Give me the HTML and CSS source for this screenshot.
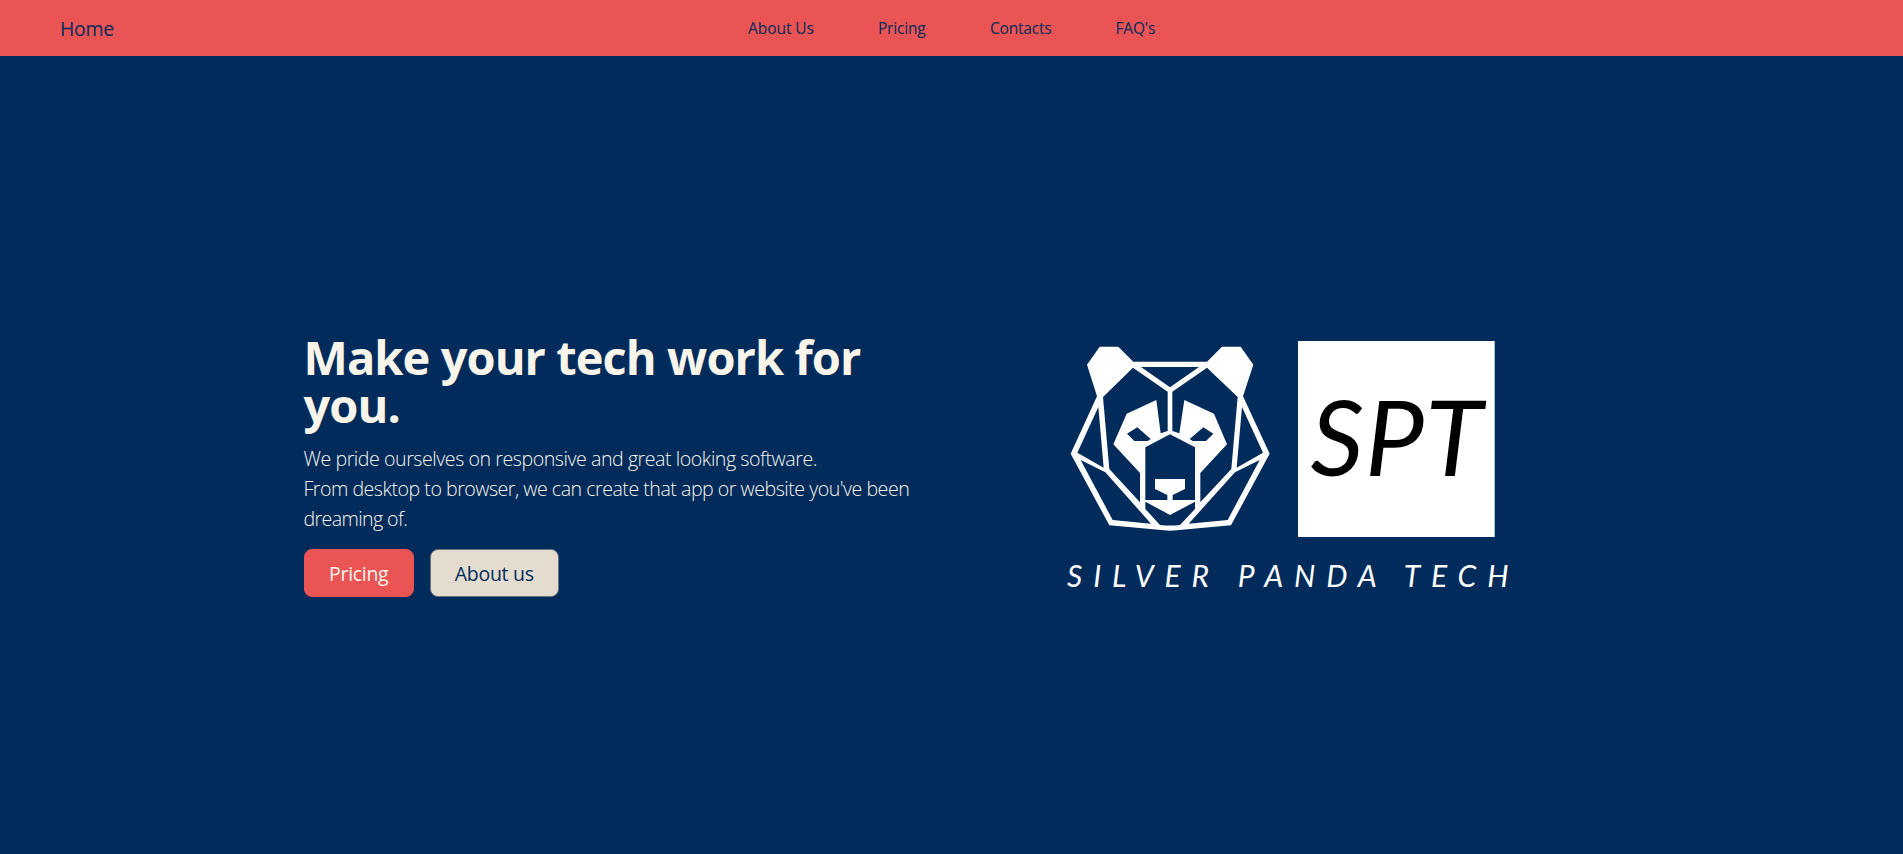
FILE: index.html
```html
<!DOCTYPE html>
<html lang="en">
<head>
<meta charset="utf-8">
<title>Silver Panda Tech</title>
<link rel="stylesheet" href="styles.css">
</head>
<body>
<nav class="navbar">
  <a class="brand">Home</a>
  <div class="links">
    <a class="link about">About Us</a>
    <a class="link pricing">Pricing</a>
    <a class="link contacts">Contacts</a>
    <a class="link faq">FAQ's</a>
  </div>
</nav>
<main class="hero">
  <section class="copy">
    <h1 class="title">Make your tech work for you.</h1>
    <p class="lead"><span class="l1">We pride ourselves on responsive and great looking software.</span><br><span class="l2">From desktop to browser, we can create that app or website you've been</span> <span class="l3">dreaming of.</span></p>
    <div class="actions">
      <button class="btn primary">Pricing</button>
      <button class="btn secondary">About us</button>
    </div>
  </section>
  <svg class="logo" viewBox="1060 335 460 265" width="460" height="265">
    <g transform="translate(1060 335) scale(.333333)" fill="#fff">
      <path d="M119 35H175L220 80H441L486 35H542L580 89L549 184L629 356L513 571L350 586Q330 588 312 586L148 571L32 356L111 184L81 89Z"/>
      <g fill="#002b5b">
        <path d="M243 96H417L330 157Z"/>
        <path d="M219 98L323 170V288L302 295L289 195L200 236L160 328L240 414V502L148 402L129 186Z"/>
        <path d="M441 98L337 170V288L358 295L373 195L462 236L501 328L421 414V502L514 402L533 186Z"/>
        <path d="M115 216L131 398L52 353Z"/>
        <path d="M546 216L530 398L609 353Z"/>
        <path d="M62 375L136 412L273 566L158 555Z"/>
        <path d="M599 375L525 412L386 566L503 555Z"/>
        <path d="M201 296L232 277L272 312L263 318H223Z"/>
        <path d="M460 296L430 277L389 312L398 318H438Z"/>
        <path d="M256 337L330 298L405 337V495H338V480L375 462V432H285V462L322 480V495H256Z"/>
        <path d="M256 500L330 540L405 500V522L360 570Q330 573 300 570L256 522Z"/>
      </g>
    </g>
    <path fill="#fff" d="M1298 341h196.7v196h-196.7z"/>
    <text class="initials" x="1310.5" y="476.3" textLength="172">SPT</text>
    <text class="name" x="1067" y="586.9" textLength="441.5">SILVER PANDA TECH</text>
  </svg>
</main>
</body>
</html>
```
FILE: styles.css
```css
* { box-sizing: border-box; }
body {
  margin: 0;
  height: 854px;
  overflow: hidden;
  background: #002b5b;
  font-family: "Open Sans", "Noto Sans", sans-serif;
}
.navbar {
  display: flex;
  height: 56px;
  padding-left: 60px;
  align-items: center;
  background: #ea5455;
  color: #002b5b;
}
.brand { width: 688px; font-size: 19.5px; letter-spacing: -.3px; }
.links { display: flex; }
.link { font-size: 15.5px; letter-spacing: -.2px; white-space: nowrap; }
.about { width: 130px; letter-spacing: -.05px; }
.pricing { width: 112px; }
.contacts { width: 125.5px; }
.hero {
  display: flex;
  align-items: flex-start;
  padding: 276px 0 0 303.5px;
}
.copy { width: 636px; margin-right: 120.5px; }
.title {
  margin: 0 0 15px;
  padding-top: 1px;
  width: 600px;
  color: #f9f5eb;
  font-size: 47px;
  font-weight: 700;
  line-height: 48px;
  letter-spacing: -.93px;
}
.lead {
  margin: 0 0 15px;
  color: #f9f5eb;
  font-size: 19.6px;
  font-weight: 300;
  line-height: 30px;
  letter-spacing: -.49px;
  white-space: nowrap;
}
.l1 { letter-spacing: -.45px; }
.l3 { display: block; letter-spacing: -.6px; }
.actions { display: flex; gap: 16px; }
.btn {
  height: 48px;
  padding: 2px 0 0;
  border: 1px solid #ea5455;
  border-radius: 8px;
  font: 400 19.5px/30px "Open Sans", sans-serif;
  letter-spacing: -.3px;
}
.primary { width: 110.5px; background: #ea5455; color: #f9f5eb; }
.secondary { width: 128.5px; background: #e4dccf; color: #002b5b; border-color: #6c757d; }
.logo { display: block; margin-top: 3px; overflow: visible; }
.initials { font: italic 400 105px Lato, sans-serif; fill: #000; }
.name { font: italic 400 30px Lato, sans-serif; fill: #fff; }
```
